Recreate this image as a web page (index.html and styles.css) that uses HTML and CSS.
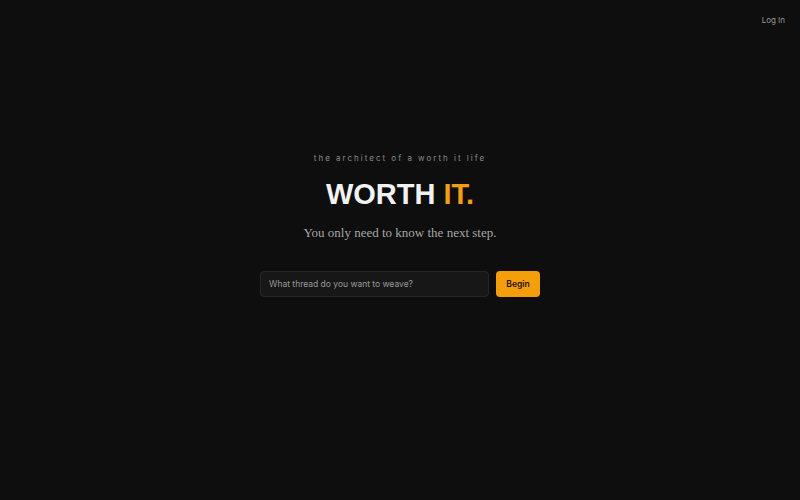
FILE: index.html
```html
<!DOCTYPE html>
<html>
<head>
<meta charset="utf-8">
<link rel="stylesheet" href="styles.css">
</head>
<body>
<header class="top">
  <a class="login" href="#">Log In</a>
</header>
<main class="hero">
  <p class="tagline">the architect of a worth it life</p>
  <h1 class="title">WORTH <span class="accent">IT.</span></h1>
  <p class="sub">You only need to know the next step.</p>
  <form class="ask">
    <input class="field" type="text" placeholder="What thread do you want to weave?">
    <button class="go" type="button">Begin</button>
  </form>
</main>
</body>
</html>
```
FILE: styles.css
```css
html, body {
  margin: 0;
  height: 100%;
  background: #0e0e0e;
  font-family: Inter, "Liberation Sans", sans-serif;
}
.top {
  display: flex;
  justify-content: flex-end;
  padding: 15px 15px 0 0;
}
.login {
  color: #9a9a9a;
  font-size: 8px;
  text-decoration: none;
}
.hero {
  display: flex;
  flex-direction: column;
  align-items: center;
  padding-top: 128px;
}
.tagline {
  margin: 0;
  color: #8a8a8a;
  font-size: 8px;
  letter-spacing: 2px;
}
.title {
  margin: 13px 0 0;
  color: #f2f2f2;
  font-family: "Liberation Sans", Arial, sans-serif;
  font-size: 29px;
  font-weight: 700;
  line-height: 36px;
}
.accent { color: #f29d12; }
.sub {
  margin: 13px 0 0;
  color: #a6a6a6;
  font-family: "Liberation Serif", serif;
  font-size: 13px;
}
.ask {
  display: flex;
  gap: 7px;
  margin-top: 30px;
}
.field {
  width: 229px;
  height: 26px;
  box-sizing: border-box;
  background: #171717;
  border: 1px solid #262626;
  border-radius: 4px;
  padding: 0 8px;
  color: #ddd;
  font-family: Inter, "Liberation Sans", sans-serif;
  font-size: 8.5px;
}
.field::placeholder { color: #9a9a9a; }
.go {
  width: 44px;
  height: 26px;
  border: none;
  border-radius: 4px;
  background: #f59e0b;
  color: #1a1204;
  font-family: Inter, "Liberation Sans", sans-serif;
  font-size: 8.5px;
  font-weight: 600;
}
```
